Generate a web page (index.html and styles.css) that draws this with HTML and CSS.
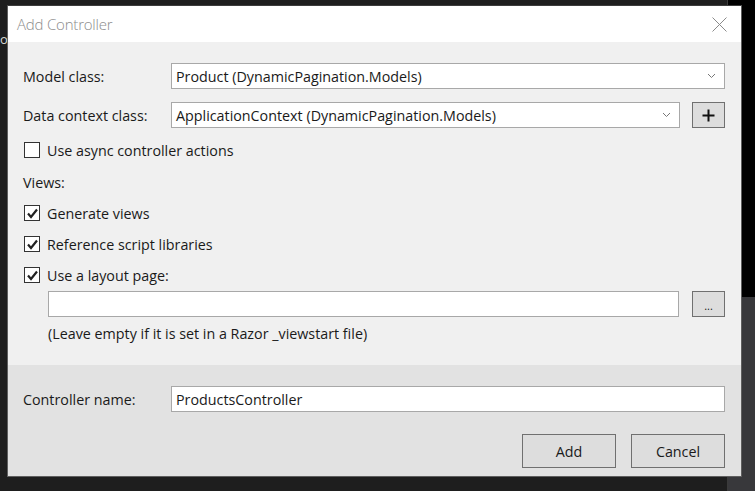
FILE: index.html
```html
<!DOCTYPE html>
<html>
<head>
<meta charset="utf-8">
<link rel="stylesheet" href="styles.css">
</head>
<body>
<div class="desktop">
  <span class="bg-text">o</span>
  <div class="side-panel">
    <div class="side-top"></div>
    <div class="side-bottom"></div>
  </div>
  <div class="dialog">
    <div class="titlebar">
      <span class="title">Add Controller</span>
      <svg class="close" width="15" height="15" viewBox="0 0 15 15"><path d="M0.5 0.5 L14.5 14.5 M14.5 0.5 L0.5 14.5" stroke="#8a8a8a" stroke-width="1" fill="none"/></svg>
    </div>
    <div class="main">
      <div class="row">
        <label class="lbl">Model class:</label>
        <div class="select"><span>Product (DynamicPagination.Models)</span><svg class="chev" width="9" height="6" viewBox="0 0 9 6"><path d="M1 1 L4.5 4.5 L8 1" stroke="#777" stroke-width="1" fill="none"/></svg></div>
      </div>
      <div class="row row2">
        <label class="lbl">Data context class:</label>
        <div class="select"><span>ApplicationContext (DynamicPagination.Models)</span><svg class="chev" width="9" height="6" viewBox="0 0 9 6"><path d="M1 1 L4.5 4.5 L8 1" stroke="#777" stroke-width="1" fill="none"/></svg></div>
        <button class="btn small plus"><svg width="13" height="13" viewBox="0 0 13 13"><path d="M6.5 0.5 V12.5 M0.5 6.5 H12.5" stroke="#111" stroke-width="2"/></svg></button>
      </div>
      <div class="check c-async"><span class="box"></span><span>Use async controller actions</span></div>
      <div class="views">Views:</div>
      <div class="check c-gen"><span class="box on"><svg width="13" height="13" viewBox="0 0 13 13"><path d="M2 6.5 L5 10 L11 2.5" stroke="#222" stroke-width="2.2" fill="none"/></svg></span><span>Generate views</span></div>
      <div class="check c-ref"><span class="box on"><svg width="13" height="13" viewBox="0 0 13 13"><path d="M2 6.5 L5 10 L11 2.5" stroke="#222" stroke-width="2.2" fill="none"/></svg></span><span>Reference script libraries</span></div>
      <div class="check c-ref"><span class="box on"><svg width="13" height="13" viewBox="0 0 13 13"><path d="M2 6.5 L5 10 L11 2.5" stroke="#222" stroke-width="2.2" fill="none"/></svg></span><span>Use a layout page:</span></div>
      <div class="layout-row">
        <div class="input"></div>
        <button class="btn small dots">...</button>
      </div>
      <div class="note">(Leave empty if it is set in a Razor _viewstart file)</div>
    </div>
    <div class="footer">
      <div class="row">
        <label class="lbl">Controller name:</label>
        <div class="input"><span>ProductsController</span></div>
      </div>
      <div class="actions">
        <button class="btn big">Add</button>
        <button class="btn big">Cancel</button>
      </div>
    </div>
  </div>
</div>
</body>
</html>
```

FILE: styles.css
```css
* { box-sizing: border-box; }
html, body { margin: 0; padding: 0; }
body {
  width: 755px;
  height: 491px;
  overflow: hidden;
  background: #1e1e1e;
  font-family: "Segoe UI", "Open Sans", "Noto Sans", sans-serif;
  font-size: 14.3px;
  color: #1a1a1a;
}
.desktop {
  position: relative;
  width: 755px;
  height: 491px;
}
.bg-text {
  position: absolute;
  left: 0;
  top: 30px;
  color: #d8d8d8;
  font-size: 13px;
}
.side-panel {
  position: absolute;
  left: 727px;
  top: 0;
  width: 28px;
  height: 491px;
  display: flex;
  flex-direction: column;
  border-left: 1px solid #3a3a3a;
}
.side-top { height: 297px; background: #000; }
.side-bottom { flex: 1; background: #38383b; }
.dialog {
  position: absolute;
  left: 7px;
  top: 5px;
  width: 735px;
  height: 472px;
  border: 1px solid #5f5f5f;
  border-top-color: #3c3c3c;
  display: flex;
  flex-direction: column;
  background: #f0f0f0;
}
.titlebar {
  height: 36px;
  background: #fff;
  display: flex;
  align-items: center;
  justify-content: space-between;
  padding: 0 14px 0 9px;
  flex: none;
}
.title {
  color: #8c8c8c;
  font-size: 15px;
  font-weight: 300;
  letter-spacing: -0.2px;
}
.main {
  height: 323px;
  flex: none;
  padding: 21px 16px 0 15px;
  display: flex;
  flex-direction: column;
}
.row {
  display: grid;
  grid-template-columns: 148px 1fr;
  align-items: center;
  height: 26px;
}
.row2 {
  grid-template-columns: 148px 1fr 45px;
  margin-top: 13px;
}
.row2 .plus { justify-self: end; }
.lbl { white-space: nowrap; }
.select, .input {
  height: 26px;
  background: #fff;
  border: 1px solid #a8a8a8;
  display: flex;
  align-items: center;
  justify-content: space-between;
  padding: 0 8px 0 4px;
  white-space: nowrap;
  overflow: hidden;
}
.btn {
  font-family: inherit;
  font-size: 14.3px;
  color: #1a1a1a;
  background: #dddddd;
  border: 1px solid #707070;
  padding: 0;
  display: flex;
  align-items: center;
  justify-content: center;
}
.btn.small { width: 33px; height: 26px; }
.dots { font-size: 11px; padding-top: 2px; }
.check {
  display: flex;
  align-items: center;
  gap: 7px;
  height: 20px;
  padding-left: 1px;
}
.c-async { margin-top: 12px; }
.c-gen { margin-top: 10px; }
.c-ref { margin-top: 11px; }
.box {
  width: 16px;
  height: 16px;
  border: 1px solid #333;
  background: #fff;
  display: flex;
  align-items: center;
  justify-content: center;
  flex: none;
}
.views {
  margin-top: 13px;
  height: 20px;
  line-height: 20px;
}
.layout-row {
  display: grid;
  grid-template-columns: 1fr 33px;
  column-gap: 13px;
  margin-top: 6px;
  margin-left: 25px;
}
.note {
  margin-top: 7px;
  margin-left: 25px;
  height: 20px;
  line-height: 20px;
}
.footer {
  flex: 1;
  background: #e2e2e2;
  padding: 21px 16px 0 15px;
  display: flex;
  flex-direction: column;
}
.actions {
  display: flex;
  justify-content: flex-end;
  gap: 15px;
  margin-top: 22px;
}
.btn.big { width: 94px; height: 34px; }
```
